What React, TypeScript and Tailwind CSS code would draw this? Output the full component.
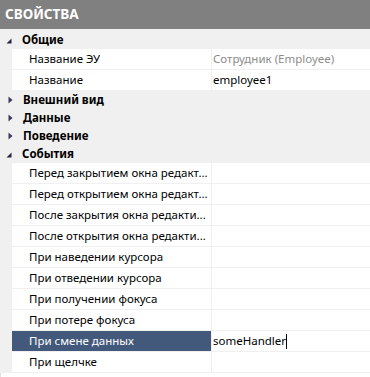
const font = { fontFamily: '"Noto Sans", "Open Sans", sans-serif' };

type Prop = { name: string; value?: string; muted?: boolean; selected?: boolean; caret?: boolean };

const general: Prop[] = [
  { name: "Название ЭУ", value: "Сотрудник (Employee)", muted: true },
  { name: "Название", value: "employee1" },
];

const events: Prop[] = [
  { name: "Перед закрытием окна редакт..." },
  { name: "Перед открытием окна редакт..." },
  { name: "После закрытия окна редакти..." },
  { name: "После открытия окна редакти..." },
  { name: "При наведении курсора" },
  { name: "При отведении курсора" },
  { name: "При получении фокуса" },
  { name: "При потере фокуса" },
  { name: "При смене данных", value: "someHandler", selected: true, caret: true },
  { name: "При щелчке" },
];

function Arrow({ open }: { open: boolean }) {
  return open ? (
    <svg width="6" height="6" viewBox="0 0 6 6" className="ml-[6px] mr-[10px] mt-[2px]">
      <path d="M5.5 0.5 L5.5 5.5 L0.5 5.5 Z" fill="#262640" />
    </svg>
  ) : (
    <svg width="5" height="8" viewBox="0 0 5 8" className="ml-[8px] mr-[10px]">
      <path d="M0.5 0.5 L4.5 4 L0.5 7.5 Z" fill="#3a3a5a" />
    </svg>
  );
}

function Group({ title, open }: { title: string; open: boolean }) {
  return (
    <div className="flex items-center h-[18px] text-[11.5px] font-bold text-black">
      <Arrow open={open} />
      <span>{title}</span>
    </div>
  );
}

function Row({ p }: { p: Prop }) {
  return (
    <div className="flex h-[21px] pl-[12px] pb-px">
      <div
        className={`w-[199px] shrink-0 pl-[17px] pr-[1px] flex items-center text-[11.5px] ${
          p.selected ? "bg-[#43597c] text-white" : "bg-white text-black"
        }`}
      >
        <span className="whitespace-nowrap overflow-hidden">{p.name}</span>
      </div>
      <div className="w-px shrink-0" />
      <div
        className={`flex-1 bg-white pl-[1px] flex items-center text-[11.5px] ${
          p.muted ? "text-[#8c8c8c]" : "text-black"
        }`}
      >
        <span>{p.value}</span>
        {p.caret && <span className="w-px h-[15px] bg-black" />}
      </div>
    </div>
  );
}

export default function App() {
  return (
    <div className="w-[370px] h-[377px] bg-[#f0f0f0] overflow-hidden" style={font}>
      <div className="h-[29px] bg-[#808080] flex items-center pl-[5px] text-white font-bold text-[13.5px]">
        СВОЙСТВА
      </div>
      <div className="pt-[2px]">
        <Group title="Общие" open />
        {general.map((p) => (
          <Row key={p.name} p={p} />
        ))}
        <Group title="Внешний вид" open={false} />
        <Group title="Данные" open={false} />
        <Group title="Поведение" open={false} />
        <Group title="События" open />
        {events.map((p) => (
          <Row key={p.name} p={p} />
        ))}
        <div className="h-[6px] bg-white border-l border-[#e0e0e0]" />
      </div>
    </div>
  );
}
